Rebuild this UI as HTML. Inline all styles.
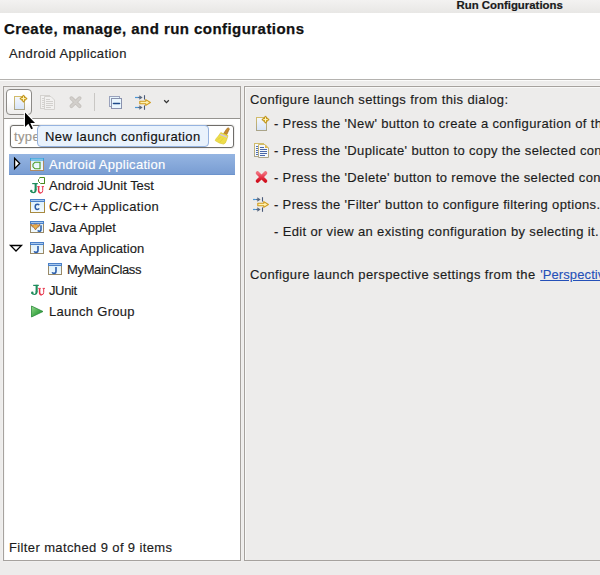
<!DOCTYPE html>
<html><head><meta charset="utf-8">
<style>
html,body{margin:0;padding:0;}
body{width:600px;height:575px;overflow:hidden;position:relative;background:#edeceb;font-family:"Liberation Sans",sans-serif;color:#1c1c1c;}
.a{position:absolute;}
.t{position:absolute;white-space:nowrap;font-size:13px;line-height:14px;-webkit-text-stroke:0.15px currentColor;}
.tr{position:absolute;white-space:nowrap;font-size:13.7px;line-height:14px;color:#1c1c1c;}
#ov{position:absolute;left:0;top:0;width:600px;height:575px;}
#titlebar{left:0;top:0;width:600px;height:13px;background:linear-gradient(#f3f2f1,#e8e7e5);}
#header{left:0;top:13px;width:600px;height:66px;background:#fff;}
#sep1{left:0;top:79px;width:600px;height:1px;background:#b4b2af;}
#sep2{left:0;top:80px;width:600px;height:1px;background:#fbfbfa;}
.frame{position:absolute;border:1px solid #a6a29e;box-shadow:-1px -1px 0 #f1f0ef, 1px 1px 0 #f0efee, inset 1px 1px 0 #f8f8f7;}
#lp{left:3px;top:86px;width:236px;height:473px;background:#fff;}
#lptool{left:4px;top:87px;width:236px;height:31px;background:#edeceb;}
#lpline{left:4px;top:118px;width:236px;height:1px;background:#95938f;}
#rp{left:244px;top:86px;width:400px;height:473px;background:#edeceb;}
#newbtn{left:6px;top:89px;width:24px;height:24px;border:1px solid #8c8a87;border-radius:4px;background:linear-gradient(#ffffff,#fdfdfd 50%,#eeedec);}
#tsep{left:94px;top:93px;width:1px;height:18px;background:#c9c7c4;}
#tf{left:10px;top:125px;width:222px;height:21px;border:1px solid #6f6d6a;border-radius:3px;background:#fff;box-shadow:0 0 0 1px #efefee;}
#tip{left:37px;top:125px;width:170px;height:20px;border:1px solid #95b3e0;border-radius:4px;background:#e9f2fc;}
#sel{left:9px;top:154px;width:226px;height:21px;background:linear-gradient(#95b5e2,#789cd2);box-shadow:inset 0 -1px 0 #6c93cc;}
.link{color:#2450b8;text-decoration:underline;letter-spacing:0.1px;margin-left:0.6px;-webkit-text-stroke:0.1px #2450b8;}
</style></head><body>

<div id="titlebar" class="a"></div>
<div class="t" style="left:456.5px;top:-1px;font-weight:bold;font-size:11.4px;line-height:12px;color:#1a1a1a;-webkit-text-stroke:0.2px #1a1a1a;">Run Configurations</div>

<div id="header" class="a"></div>
<div class="t" style="left:4px;top:21px;font-weight:bold;font-size:15px;line-height:16px;letter-spacing:0.45px;color:#111;-webkit-text-stroke:0.25px #111;">Create, manage, and run configurations</div>
<div class="t" style="left:9px;top:47px;color:#222;letter-spacing:0.34px;">Android Application</div>
<div id="sep1" class="a"></div>
<div id="sep2" class="a"></div>

<!-- left panel -->
<div id="lp" class="frame"></div>
<div id="lptool" class="a"></div>
<div id="lpline" class="a"></div>
<div id="newbtn" class="a"></div>
<div id="tsep" class="a"></div>

<!-- right panel -->
<div id="rp" class="frame"></div>

<div id="tf" class="a"></div>
<div class="t" style="left:14px;top:130px;color:#9c968e;letter-spacing:0.35px;">type</div>
<div id="tip" class="a"></div>
<div class="t" style="left:45px;top:130px;color:#111;letter-spacing:0.40px;">New launch configuration</div>

<div id="sel" class="a"></div>
<div class="t" style="left:49px;top:158px;color:#fff;letter-spacing:0.27px;">Android Application</div>
<div class="t" style="left:49px;top:179px;letter-spacing:-0.02px;">Android JUnit Test</div>
<div class="t" style="left:49px;top:200px;letter-spacing:0.36px;">C/C++ Application</div>
<div class="t" style="left:49px;top:221px;letter-spacing:-0.03px;">Java Applet</div>
<div class="t" style="left:49px;top:242px;letter-spacing:0.09px;">Java Application</div>
<div class="t" style="left:67px;top:263px;letter-spacing:-0.35px;">MyMainClass</div>
<div class="t" style="left:49px;top:284px;letter-spacing:-0.38px;">JUnit</div>
<div class="t" style="left:49px;top:305px;letter-spacing:0.29px;">Launch Group</div>

<div class="t" style="left:9px;top:541px;letter-spacing:0.38px;">Filter matched 9 of 9 items</div>

<div class="t" style="left:250px;top:93px;letter-spacing:0.38px;">Configure launch settings from this dialog:</div>
<div class="t" style="left:274px;top:117px;letter-spacing:0.34px;">- Press the 'New' button to create a configuration of the selected type.</div>
<div class="t" style="left:274px;top:144px;letter-spacing:0.34px;">- Press the 'Duplicate' button to copy the selected configuration.</div>
<div class="t" style="left:274px;top:171px;letter-spacing:0.34px;">- Press the 'Delete' button to remove the selected configuration.</div>
<div class="t" style="left:274px;top:198px;letter-spacing:0.34px;">- Press the 'Filter' button to configure filtering options.</div>
<div class="t" style="left:274px;top:225px;letter-spacing:0.35px;">- Edit or view an existing configuration by selecting it.</div>
<div class="t" style="left:250px;top:268px;letter-spacing:0.38px;">Configure launch perspective settings from the <span class="link">'Perspectives' preference page</span>.</div>

<svg id="ov" width="600" height="575" viewBox="0 0 600 575">
<defs>
 <linearGradient id="docg" x1="0" y1="0" x2="0" y2="1"><stop offset="0" stop-color="#f6f8fc"/><stop offset="1" stop-color="#d6e4f8"/></linearGradient>
 <linearGradient id="docb" x1="0" y1="0" x2="0" y2="1"><stop offset="0" stop-color="#d2bc6a"/><stop offset="1" stop-color="#aaa488"/></linearGradient>
 <linearGradient id="redx" x1="0" y1="0" x2="0" y2="1"><stop offset="0" stop-color="#f0707c"/><stop offset="0.5" stop-color="#e8364a"/><stop offset="1" stop-color="#d0101e"/></linearGradient>
 <linearGradient id="shaft" x1="0" y1="0" x2="1" y2="0"><stop offset="0" stop-color="#4a9ad8"/><stop offset="1" stop-color="#5a6a80"/></linearGradient>
 <linearGradient id="winf" x1="0" y1="0" x2="0" y2="1"><stop offset="0" stop-color="#d8eefa"/><stop offset="1" stop-color="#f4fbff"/></linearGradient>
 <linearGradient id="grn" x1="0" y1="0" x2="1" y2="1"><stop offset="0" stop-color="#9ad890"/><stop offset="0.5" stop-color="#4ab050"/><stop offset="1" stop-color="#1e8a30"/></linearGradient>
 <g id="newdoc">
  <rect x="0.5" y="0.5" width="10" height="13" fill="url(#docg)" stroke="url(#docb)" stroke-width="1"/>
  <path d="M9.50,-1.10 L11.06,1.04 L13.20,2.60 L11.06,4.16 L9.50,6.30 L7.94,4.16 L5.80,2.60 L7.94,1.04 Z" fill="#d0a018" stroke="#b88a10" stroke-width="0.8" stroke-linejoin="round"/>
  <path d="M9.5,0.4 V4.8 M7.3,2.6 H11.7" stroke="#fff6c0" stroke-width="1"/>
 </g>
 <g id="dupdoc">
  <rect x="0.5" y="0.5" width="9" height="13" fill="#f4f8fd" stroke="url(#docb)"/>
  <path d="M2,3.5 H5 M2,5.5 H5 M2,7.5 H5 M2,9.5 H5 M2,11.5 H5" stroke="#5070b0" stroke-width="1"/>
  <path d="M4.5,1.5 H11 L14.5,5 V14.5 H4.5 Z" fill="#f4f8fd" stroke="url(#docb)"/>
  <path d="M11,1.5 V5 H14.5 Z" fill="#e0b850"/>
  <path d="M6,4.5 H10 M6,6.5 H13 M6,8.5 H13 M6,10.5 H13 M6,12.5 H11" stroke="#4a68a8" stroke-width="1"/>
 </g>
 <g id="dupdis">
  <rect x="0.5" y="0.5" width="9" height="13" fill="#f2f1f0" stroke="#d4d2cf"/>
  <path d="M2,3.5 H5 M2,5.5 H5 M2,7.5 H5 M2,9.5 H5 M2,11.5 H5" stroke="#d4d2cf" stroke-width="1"/>
  <path d="M4.5,1.5 H11 L14.5,5 V14.5 H4.5 Z" fill="#f2f1f0" stroke="#d4d2cf"/>
  <path d="M6,4.5 H10 M6,6.5 H13 M6,8.5 H13 M6,10.5 H13 M6,12.5 H11" stroke="#d2d0cd" stroke-width="1"/>
 </g>
 <g id="filt">
  <path d="M0,2.5 H3" stroke="#4a98d8" stroke-width="1.2"/>
  <path d="M3,2.5 H6" stroke="#5a7090" stroke-width="1.2"/>
  <path d="M4.3,0.3 L7.6,2.5 L4.3,4.7 Z" fill="#5a6a80"/>
  <path d="M9.5,0.2 V4.6" stroke="#4a5a78" stroke-width="1.1"/>
  <path d="M0,12.5 H3" stroke="#4a98d8" stroke-width="1.2"/>
  <path d="M3,12.5 H6" stroke="#5a7090" stroke-width="1.2"/>
  <path d="M4.3,10.3 L7.6,12.5 L4.3,14.7 Z" fill="#5a6a80"/>
  <path d="M9.5,10.4 V14.8" stroke="#4a5a78" stroke-width="1.1"/>
  <path d="M4.8,6.3 H10.8 V4.6 L15.4,7.5 L10.8,10.4 V8.7 H4.8 Z" fill="#fff2b0" stroke="#d09a1c" stroke-width="1.1" stroke-linejoin="round"/>
 </g>
 <g id="jwin">
  <rect x="0.5" y="0.5" width="13" height="11" fill="url(#winf)" stroke="#9a8a68"/>
  <rect x="0" y="0" width="14" height="3" fill="#4a80c8"/>
  <path d="M1,1.5 H13" stroke="#a8c8ec" stroke-width="1"/>
  <path d="M8,4 V8.3 Q8,10.4 6,10.4 Q4.6,10.4 4.2,9.3" fill="none" stroke="#2c5eac" stroke-width="1.6"/>
 </g>
<g id="ju">
  <rect x="2.8" y="0" width="5.6" height="1.2" fill="#1f8c5c"/>
  <rect x="5.2" y="0" width="2.1" height="7" fill="#1f8c5c"/>
  <path d="M5.2,6.5 H7.3 Q7.3,10.2 4,10.2 Q1.4,10.2 0.8,8.4 L2.4,7.8 Q3,9.1 4.1,9.1 Q5.2,9.1 5.2,6.5 Z" fill="#1f8c5c"/>
  <circle cx="1.9" cy="7.9" r="1.2" fill="#1f8c5c"/>
  <path d="M7.8,3.6 H10.4 M12.2,3.6 H14.6" stroke="#e8344c" stroke-width="0.9"/>
  <path d="M9.2,3.6 V7.6 Q9.2,10 11.4,10" fill="none" stroke="#e8344c" stroke-width="1.5"/>
  <path d="M11.2,10 Q13.3,10 13.3,7.6 V3.6" fill="none" stroke="#e8344c" stroke-width="1"/>
 </g>
</defs>

<!-- toolbar -->
<use href="#newdoc" x="14" y="96"/>
<use href="#dupdis" x="40" y="95"/>
<path d="M71.4,98.2 L79.6,106.2 M79.6,98.2 L71.4,106.2" stroke="#c6c2be" stroke-width="3.8" stroke-linecap="round"/>
<path d="M71.4,98.2 L79.6,106.2 M79.6,98.2 L71.4,106.2" stroke="#d2cfcb" stroke-width="2" stroke-linecap="round"/>
<rect x="109.5" y="96.5" width="10" height="10" fill="#e6f5fd" stroke="#9aa2bc"/>
<rect x="111.5" y="98.5" width="10" height="10" fill="#eaf7fe" stroke="#8a92ae"/>
<path d="M113.5,103.5 H119.5" stroke="#1d4a8a" stroke-width="1.6" stroke-linecap="round"/>
<use href="#filt" x="135" y="95"/>
<path d="M164.2,100.3 L166.5,102.6 L168.8,100.3" fill="none" stroke="#333" stroke-width="1.3"/>

<!-- broom -->
<path d="M223.6,133.6 L227,128.4 Q228.6,127.2 229.4,128.8 L226.8,134.6 Z" fill="#c88e2e" stroke="#a06a1a" stroke-width="0.7"/>
<path d="M220.8,132.6 L228,135.6 L226.4,140.6 Q225.4,143.9 223.6,144.1 Q219,143.6 215.2,140.6 Q215.8,138.6 218.2,136.2 Z" fill="#eedd4a" stroke="#d6c224" stroke-width="0.6"/>
<path d="M217.5,139.5 L220.5,137.5 M220,142 L223,138.5" stroke="#d8c838" stroke-width="0.6"/>
<path d="M220.2,134.4 L227,137.2" stroke="#d0c4e4" stroke-width="1.4"/>
<!-- cursor -->
<path d="M25,112.6 L25,127 L28.4,123.8 L31.2,129.2 L32.9,128.4 L30.3,123.1 L35,123.1 Z" fill="#fff" stroke="#fff" stroke-width="2.4" stroke-linejoin="round"/>
<path d="M25,112.6 L25,127 L28.4,123.8 L31.2,129.2 L32.9,128.4 L30.3,123.1 L35,123.1 Z" fill="#000"/>
<!-- tree -->
<path d="M14.6,158.3 L19.7,163.5 L14.6,168.7 Z" fill="#fff" stroke="#000" stroke-width="1.3" stroke-linejoin="miter"/>
<g transform="translate(30,158)">
 <rect x="0.5" y="0.5" width="13" height="12" fill="url(#winf)" stroke="#b08a60"/>
 <rect x="0" y="0" width="14" height="2.6" fill="#38a0d8"/>
 <path d="M1,1.2 H13" stroke="#b8e0f4" stroke-width="0.8"/>
 <path d="M10.2,4.2 H5 L3,6.2 V8.8 L5,10.8 H10 M10,3.8 V11.2" fill="none" stroke="#4a9a22" stroke-width="1.1"/>
</g>
<path d="M39.5,177.5 H44.5 V184 M44.5,183.5 H40.5 L38.5,181.5 V179.5 L39.5,178.5" fill="none" stroke="#4a8a20" stroke-width="1"/>
<use href="#ju" x="29.4" y="183"/>
<g transform="translate(30,199)">
 <rect x="0.5" y="0.5" width="14" height="13" fill="url(#winf)" stroke="#a88a40"/>
 <rect x="0" y="0" width="15" height="3" fill="#4a80c8"/>
 <path d="M1,1.5 H14" stroke="#a8c8ec" stroke-width="1"/>
 <path d="M9.2,6.2 Q8.6,5.2 7.3,5.2 Q5.2,5.2 5.2,7.8 Q5.2,10.4 7.3,10.4 Q8.6,10.4 9.2,9.4" fill="none" stroke="#2c5ca6" stroke-width="1.5"/>
</g>
<g transform="translate(30,221)">
 <rect x="0.5" y="0.5" width="13" height="11" fill="url(#winf)" stroke="#9a8a68"/>
 <rect x="0" y="0" width="14" height="3" fill="#4a80c8"/>
 <path d="M1,1.5 H13" stroke="#a8c8ec" stroke-width="1"/>
 <path d="M1,3.4 L3,4.2 L4.6,3.2 L5.5,3.6 L6.4,3.2 L8,4.2 L10,3.4 L9,5.6 L7,6.4 L6,8.4 L5,8.4 L4,6.4 L2,5.6 Z" fill="#eab04a" stroke="#9a5a30" stroke-width="0.7" stroke-linejoin="round"/>
 <path d="M11,4.2 V8.4 Q11,10.3 9.2,10.3 Q8.2,10.3 7.8,9.4" fill="none" stroke="#2a5eaa" stroke-width="1.5"/>
</g>
<path d="M10.5,245.5 L21.5,245.5 L16,251 Z" fill="#fff" stroke="#000" stroke-width="1.3" stroke-linejoin="miter"/>
<use href="#jwin" x="30" y="242"/>
<use href="#jwin" x="48" y="263"/>
<use href="#ju" x="30.4" y="284.8"/>
<path d="M31.5,306 L43,311.5 L31.5,317 Z" fill="url(#grn)" stroke="#2a8a3a" stroke-width="0.8" stroke-linejoin="round"/>

<!-- right panel icons -->
<use href="#newdoc" x="256" y="117"/>
<use href="#dupdoc" x="254" y="143"/>
<path d="M257.5,173 L265.5,181 M265.5,173 L257.5,181" stroke="url(#redx)" stroke-width="3.6" stroke-linecap="round"/>
<use href="#filt" x="253" y="197"/>
</svg>

</body></html>
